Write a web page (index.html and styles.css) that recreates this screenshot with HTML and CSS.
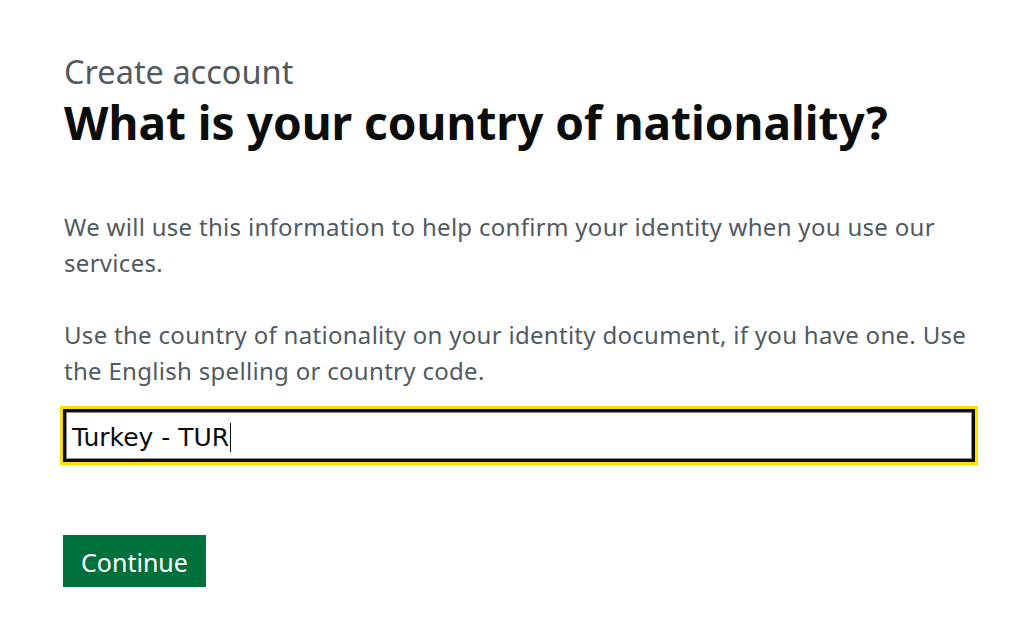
FILE: index.html
```html
<!DOCTYPE html>
<html lang="en">
<head>
<meta charset="utf-8">
<title>What is your country of nationality?</title>
<link rel="stylesheet" href="styles.css">
</head>
<body>
<main class="page">
  <span class="caption">Create account</span>
  <h1 class="heading">What is your country of nationality?</h1>
  <p class="hint">We will use this information to help confirm your identity when you use our services.</p>
  <p class="hint">Use the country of nationality on your identity document, if you have one. Use the English spelling or country code.</p>
  <div class="field">
    <div class="input"><span class="value">Turkey - TUR</span><span class="caret"></span></div>
  </div>
  <button class="button" type="button">Continue</button>
</main>
</body>
</html>
```
FILE: styles.css
```css
html, body {
  margin: 0;
  padding: 0;
  background: #ffffff;
}
.page {
  padding: 52px 0 0 64px;
  width: 930px;
  font-family: "Noto Sans", sans-serif;
  color: #0b0c0c;
}
.caption {
  display: block;
  font-size: 32.5px;
  line-height: 40px;
  color: #505a5f;
}
.heading {
  margin: 0;
  font-size: 46px;
  line-height: 60px;
  font-weight: 700;
  letter-spacing: 0;
}
.hint {
  margin: 0;
  font-size: 24px;
  line-height: 36px;
  letter-spacing: 0.3px;
  color: #505a5f;
}
.heading + .hint {
  margin-top: 57px;
}
.hint + .hint {
  margin-top: 36px;
}
.field {
  margin-top: 20px;
  margin-left: -1px;
}
.input {
  box-sizing: border-box;
  width: 912px;
  height: 53px;
  border: 3px solid #0b0c0c;
  box-shadow: inset 0 0 0 1px #8a8a8a;
  outline: 3px solid #ffdd00;
  display: flex;
  align-items: center;
  padding: 3px 0 0 6px;
  font-family: "DejaVu Sans", sans-serif;
  font-size: 25px;
  color: #0b0c0c;
}
.caret {
  width: 1px;
  height: 29px;
  background: #0b0c0c;
  margin-left: 1px;
}
.button {
  margin: 73px 0 0 -1px;
  display: block;
  box-sizing: border-box;
  background: #00703c;
  color: #ffffff;
  border: 0;
  box-shadow: 0 3px 0 #002d18;
  font-family: "Noto Sans", sans-serif;
  font-size: 25px;
  line-height: 30px;
  padding: 12px 0 10px;
  width: 143px;
  height: 52px;
  text-align: center;
  cursor: pointer;
}
```
